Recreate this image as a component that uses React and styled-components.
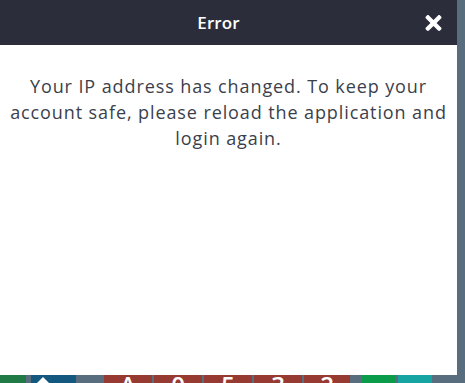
import React from "react";
import styled, { createGlobalStyle } from "styled-components";

const GlobalStyle = createGlobalStyle`
  html, body {
    margin: 0;
    padding: 0;
    background: #586d7e;
    overflow: hidden;
  }
  body {
    font-family: "Open Sans", "Liberation Sans", sans-serif;
  }
`;

const Screen = styled.div`
  display: grid;
  grid-template-rows: 375px 8px;
  width: 465px;
  height: 383px;
  background: #586d7e;
`;

const Dialog = styled.div`
  display: flex;
  flex-direction: column;
  width: 457px;
  height: 375px;
  background: #ffffff;
`;

const Header = styled.div`
  display: flex;
  align-items: center;
  height: 45px;
  padding: 0 15px 0 12px;
  background: #2b2e3a;
  box-sizing: border-box;
`;

const Title = styled.div`
  flex: 1;
  text-align: center;
  color: #ffffff;
  font-size: 17px;
  font-weight: 600;
  letter-spacing: 0.1px;
`;

const CloseButton = styled.button`
  display: flex;
  align-items: center;
  justify-content: center;
  width: 17px;
  height: 17px;
  padding: 0;
  border: none;
  background: none;
  color: #ffffff;
  cursor: pointer;
`;

const Message = styled.p`
  margin: 0;
  padding: 28px 6px 0;
  text-align: center;
  color: #3b3f4c;
  font-size: 18px;
  line-height: 26px;
  letter-spacing: 0.9px;
`;

const TileBar = styled.div`
  display: flex;
  overflow: hidden;
`;

const Tile = styled.div`
  flex: none;
  width: ${(p) => p.$w}px;
  margin-left: ${(p) => p.$gap}px;
  background: ${(p) => p.$color};
  color: #ffffff;
  font-size: 24px;
  font-weight: 600;
  line-height: 20px;
  text-align: center;
  overflow: hidden;
`;

const Caret = styled.div`
  width: 0;
  height: 0;
  margin: 2px 0 0 6px;
  border-left: 6px solid transparent;
  border-right: 6px solid transparent;
  border-bottom: 6px solid #ffffff;
`;

const tiles = [
  { w: 26, gap: 0, color: "#1f7a46" },
  { w: 45, gap: 5, color: "#12587f", caret: true },
  { w: 48, gap: 28, color: "#973a32", label: "A" },
  { w: 48, gap: 2, color: "#973a32", label: "0" },
  { w: 48, gap: 2, color: "#973a32", label: "5" },
  { w: 48, gap: 2, color: "#973a32", label: "3" },
  { w: 46, gap: 2, color: "#973a32", label: "2" },
  { w: 33, gap: 12, color: "#0b9c4a" },
  { w: 34, gap: 3, color: "#16a4a2" },
];

const CloseIcon = () => (
  <svg width="17" height="16" viewBox="0 80 352 352" fill="currentColor">
    <path d="M242.72 256l100.07-100.07c12.28-12.28 12.28-32.19 0-44.48l-22.24-22.24c-12.28-12.28-32.19-12.28-44.48 0L176 189.28 75.93 89.21c-12.28-12.28-32.19-12.28-44.48 0L9.21 111.45c-12.28 12.28-12.28 32.19 0 44.480L109.28 256 9.21 356.07c-12.28 12.28-12.28 32.19 0 44.48l22.24 22.24c12.28 12.28 32.2 12.28 44.48 0L176 322.72l100.07 100.07c12.28 12.28 32.2 12.28 44.48 0l22.24-22.24c12.28-12.28 12.28-32.19 0-44.48L242.72 256z" />
  </svg>
);

export default function App() {
  return (
    <>
      <GlobalStyle />
      <Screen>
        <Dialog>
          <Header>
            <Title>Error</Title>
            <CloseButton aria-label="Close">
              <CloseIcon />
            </CloseButton>
          </Header>
          <Message>
            Your IP address has changed. To keep your account safe, please
            reload the application and login again.
          </Message>
        </Dialog>
        <TileBar>
          {tiles.map((t, i) => (
            <Tile key={i} $w={t.w} $gap={t.gap} $color={t.color}>
              {t.caret ? <Caret /> : t.label}
            </Tile>
          ))}
        </TileBar>
      </Screen>
    </>
  );
}
